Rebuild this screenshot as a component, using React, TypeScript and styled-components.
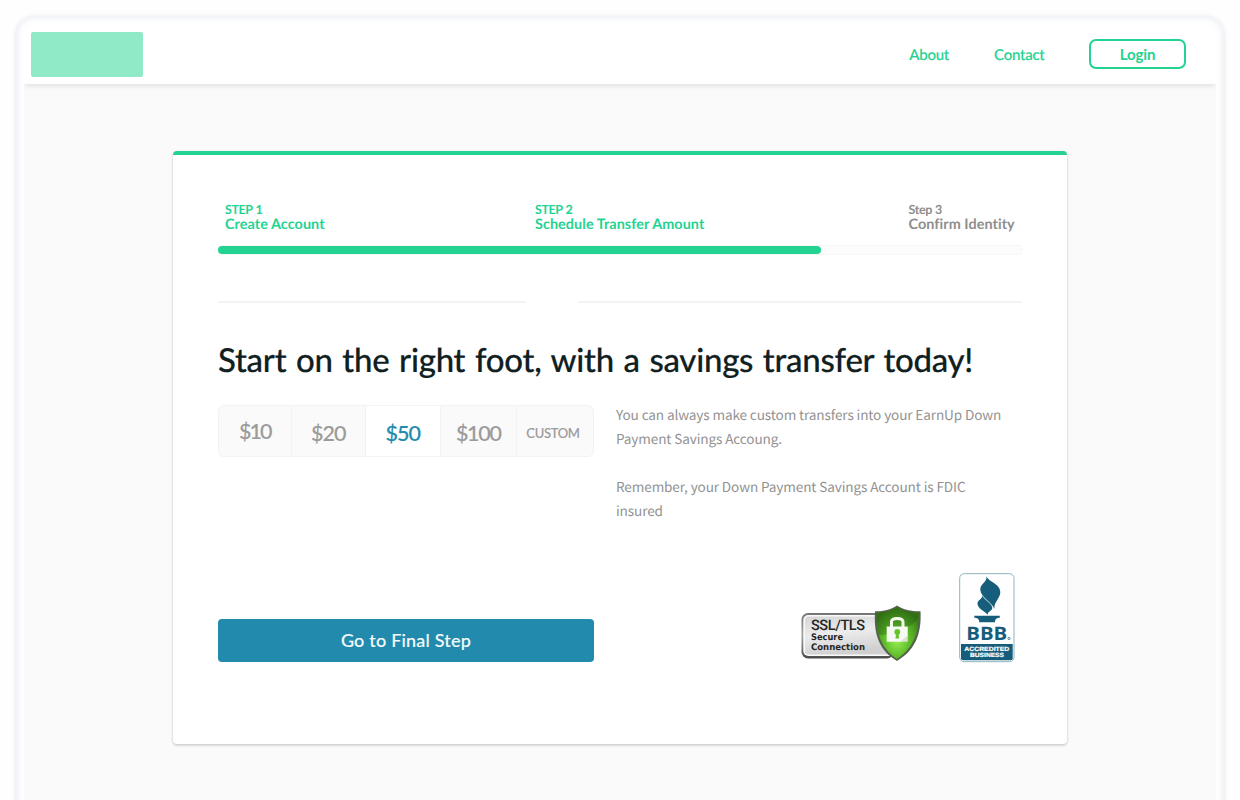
import React from 'react';
import styled, { createGlobalStyle } from 'styled-components';

const green = '#24d391';
const teal = '#228bad';
const display = "Lato, 'Open Sans', sans-serif";
const body = "'Noto Sans CJK SC', 'Noto Sans', sans-serif";

const GlobalStyle = createGlobalStyle`
  * { box-sizing: border-box; }
  html, body { margin: 0; background: #fefefe; }
  body { height: 800px; overflow: hidden; font-family: ${display}; text-rendering: geometricPrecision; }
  button { font-family: inherit; padding: 0; cursor: pointer; }
  p, h1 { margin: 0; }
`;

const Frame = styled.div`
  margin: 16px 16px 0 15.5px;
  height: 820px;
  padding: 8px 8px 0 8.5px;
  border-radius: 18px;
  background: #fff;
  box-shadow: inset 0 0 9px #e3e7f0, 0 1px 4px rgba(60, 70, 100, 0.13), 0 2px 14px rgba(60, 60, 70, 0.02);
`;

const Header = styled.header`
  position: relative;
  height: 60px;
  display: flex;
  align-items: center;
  padding: 0 30px 0 7.3px;
  box-shadow: 0 3px 5px -1px rgba(0, 0, 0, 0.1);
  clip-path: inset(0 0 -10px 0);
`;

const Logo = styled.div`
  width: 112px;
  height: 45px;
  border-radius: 2px;
  background: #90eac8;
  margin-right: auto;
`;

const NavLink = styled.a<{ $gap: number; $track: number }>`
  color: ${green};
  font-size: 15px;
  font-weight: 500;
  line-height: 20px;
  white-space: nowrap;
  letter-spacing: ${p => p.$track}px;
  -webkit-text-stroke: 0.15px ${green};
  margin: 2px ${p => p.$gap}px 0 0;
`;

const LoginButton = styled.button`
  width: 97px;
  height: 30px;
  border: 2px solid ${green};
  border-radius: 7px;
  background: #fff;
  color: ${green};
  font-size: 15px;
  font-weight: 700;
  letter-spacing: -0.1px;
  line-height: 26px;
`;

const Content = styled.main`
  background: #fafafa;
  height: 750px;
  padding: 67px 149px 0;
`;

const Card = styled.section`
  width: 894px;
  height: 593px;
  padding: 48px 44px 0 45px;
  border-top: 4px solid ${green};
  border-radius: 4px;
  background: #fff;
  box-shadow: 0 1px 3px rgba(0, 0, 0, 0.18), 0 2px 3px rgba(0, 0, 0, 0.05);
`;

const Steps = styled.div`
  display: grid;
  grid-template-columns: 310px 373.5px 1fr;
  padding-left: 7px;
  height: 42px;
`;

const Step = styled.div<{ $done?: boolean }>`
  display: flex;
  flex-direction: column;
  color: ${p => (p.$done ? green : '#8e8e8e')};
  white-space: nowrap;
`;

const StepNumber = styled.span`
  font-size: 12.5px;
  font-weight: 700;
  line-height: 14px;
  letter-spacing: -0.4px;
  word-spacing: 0.6px;
`;

const StepName = styled.span`
  font-size: 14.4px;
  font-weight: 700;
  line-height: 15px;
  letter-spacing: 0.06px;
`;

const Track = styled.div`
  height: 10px;
  border: 1px solid #f6f6f6;
  border-left: 0;
  border-radius: 5px;
  background: #fcfcfc;
`;

const Fill = styled.div`
  width: 603px;
  height: 8px;
  border-radius: 4px;
  background: ${green};
`;

const Dividers = styled.div`
  display: grid;
  grid-template-columns: 308px 444px;
  column-gap: 52px;
  margin-top: 46px;
`;

const Line = styled.div`
  height: 2px;
  background: #f4f4f4;
`;

const Title = styled.h1`
  margin-top: 37px;
  font-size: 33px;
  font-weight: 500;
  line-height: 40px;
  letter-spacing: -0.27px;
  word-spacing: 1.6px;
  white-space: nowrap;
  color: #10201f;
  -webkit-text-stroke: 0.2px #10201f;
`;

const Choices = styled.div`
  display: grid;
  grid-template-columns: 376px 1fr;
  column-gap: 22px;
  margin-top: 25px;
  height: 214px;
`;

const Amounts = styled.div`
  display: grid;
  grid-template-columns: 72.5px 74.5px 74.5px 76.5px 1fr;
  height: 52px;
  border: 1px solid #f3f3f3;
  border-radius: 6px;
  background: #fafafa;
  overflow: hidden;
`;

const Amount = styled.button<{ $active?: boolean; $small?: boolean; $drop?: number; $track?: number }>`
  border: 0;
  border-right: 1px solid #f3f3f3;
  background: ${p => (p.$active ? '#fff' : 'transparent')};
  color: ${p => (p.$active ? teal : '#9b9b9b')};
  font-size: ${p => (p.$small ? 13 : 21.5)}px;
  font-weight: 500;
  letter-spacing: ${p => (p.$small ? -0.3 : p.$track ?? -0.9)}px;
  -webkit-text-stroke: 0.15px ${p => (p.$active ? teal : '#9b9b9b')};
  padding: ${p => p.$drop ?? 3}px ${p => (p.$small ? 4 : 0)}px 0 0;
  &:last-child { border-right: 0; }
`;

const Notes = styled.div`
  width: 392px;
  margin-top: -3px;
  font-family: ${body};
  font-size: 13.6px;
  line-height: 24px;
  color: #929292;
  letter-spacing: -0.125px;
  p + p { margin-top: 24px; }
`;

const Footer = styled.div`
  display: grid;
  grid-template-columns: 376px 1fr;
`;

const Submit = styled.button`
  height: 43px;
  border: 0;
  border-radius: 4px;
  background: ${teal};
  color: #f4fafc;
  font-size: 18px;
  font-weight: 500;
  letter-spacing: 0.2px;
  padding-bottom: 2px;
  -webkit-text-stroke: 0.1px #f4fafc;
`;

const Badges = styled.div`
  display: flex;
  align-items: flex-end;
  justify-content: flex-end;
  margin-top: -50px;
  height: 94px;
  padding-right: 8px;
  gap: 35px;
`;

const SslBadge = () => (
  <svg width="124" height="60" viewBox="0 0 124 60">
    <defs>
      <linearGradient id="plate" x1="0" y1="0" x2="0.3" y2="1">
        <stop offset="0" stopColor="#d6d6d6" />
        <stop offset="0.5" stopColor="#ececec" />
        <stop offset="1" stopColor="#d0d0d0" />
      </linearGradient>
      <linearGradient id="rim" x1="0" y1="0" x2="0" y2="1">
        <stop offset="0" stopColor="#757575" />
        <stop offset="0.5" stopColor="#a5a5a5" />
        <stop offset="1" stopColor="#4a4a4a" />
      </linearGradient>
      <radialGradient id="leaf" cx="0.48" cy="0.65" r="0.62">
        <stop offset="0" stopColor="#98ec50" />
        <stop offset="0.5" stopColor="#5ebc2a" />
        <stop offset="1" stopColor="#3a8018" />
      </radialGradient>
    </defs>
    <rect x="1.500" y="10" width="92" height="45.500" rx="6.500" fill="url(#rim)" />
    <rect x="3.300" y="12" width="90" height="41" rx="5" fill="#fafafa" />
    <rect x="5" y="13.500" width="88" height="38" rx="3.500" fill="url(#plate)" />
    <g fill="#262626">
      <text x="11" y="27.300" fontFamily="Roboto, sans-serif" fontSize="14.500" fontWeight="500" textLength="54">SSL/TLS</text>
      <g fontFamily="'DejaVu Sans', sans-serif" fontSize="9" fontWeight="700">
        <text x="11" y="36.900" textLength="32" lengthAdjust="spacingAndGlyphs">Secure</text>
        <text x="11" y="47" textLength="54" lengthAdjust="spacingAndGlyphs">Connection</text>
      </g>
    </g>
    <path d="M97 2.500C90 7 83 8.500 75 8.300C74 26 76 46 97 58C118 46 121.500 26 120.500 8.300C112 8.500 104 7 97 2.500Z" fill="#56614e" />
    <path d="M97 4.300C90.500 8.200 84 9.700 76.700 9.700C76 26.500 79 44 97 56C115 44 119.300 26.500 118.800 9.700C111 9.700 103.500 8.200 97 4.300Z" fill="url(#leaf)" />
    <path d="M97 4.300C90.500 8.200 84 9.700 76.700 9.700C76.500 17 77 25 79 32C92 32 110 26 118.500 15L118.800 9.700C111 9.700 103.500 8.200 97 4.300Z" fill="#1d4a0c" opacity="0.28" />
    <path d="M91.500 24V18.800Q91.500 15.500 97.200 15.500T103 18.800V24" fill="none" stroke="#f4faee" strokeWidth="3" />
    <path d="M86.700 23.500H107.700V33.500L102.500 38.700H86.700Z" fill="#f6faf2" />
    <path d="M107.700 32.500L100 38.700H107.700Z" fill="#d9e3d0" />
    <circle cx="97.300" cy="29" r="2.900" fill="#68c22c" />
    <path d="M96.200 30H98.400L99.200 35.500H95.500Z" fill="#68c22c" />
  </svg>
);

const BbbBadge = () => (
  <svg width="56" height="90" viewBox="0 0 56 90">
    <rect x="0.700" y="0.700" width="54.300" height="88" rx="4.500" fill="#fff" stroke="#8fb2c0" />
    <path d="M2 71H53.700V85.500Q53.700 87.300 51.500 87.300H4.500Q2 87.300 2 85.500Z" fill="#155d7b" />
    <g fill="#155d7b">
      <path d="M27.500 3.300C29.500 9 41 10.500 41.300 19C41.500 25 34.500 29 35.500 36C33.500 30 22 24.500 21.300 17C20.800 10.500 28.500 9.500 27.500 3.300Z" />
      <path d="M23.500 22.500C25 27.500 33.300 30 33.300 35C33.300 38 28.300 38.500 28.700 41.800C26 38.500 18.500 35.500 18.500 30.500C18.500 27 23 26.500 23.500 22.500Z" />
      <path d="M15.300 42.700H40.800V44.700C38 44.700 36 45.500 36 49.300H20.300C20.300 45.500 18 44.700 15.300 44.700Z" />
    </g>
    <g fontFamily="'Liberation Sans', sans-serif" fontWeight="700">
      <text x="7.300" y="66.500" fontFamily="'Open Sans', sans-serif" fontSize="18.500" fill="#155d7b" textLength="41" lengthAdjust="spacingAndGlyphs">BBB</text>
      <circle cx="50" cy="65.500" r="1.100" fill="none" stroke="#155d7b" strokeWidth="0.700" />
      <text x="5.300" y="77.900" fontSize="6.200" fill="#fff" stroke="#fff" strokeWidth="0.200" textLength="45" lengthAdjust="spacingAndGlyphs">ACCREDITED</text>
      <text x="11" y="84.400" fontSize="6.200" fill="#fff" stroke="#fff" strokeWidth="0.200" textLength="34" lengthAdjust="spacingAndGlyphs">BUSINESS</text>
    </g>
  </svg>
);

export default function App() {
  return (
    <>
      <GlobalStyle />
      <Frame>
        <Header>
          <Logo />
          <NavLink $gap={45} $track={-0.25}>About</NavLink>
          <NavLink $gap={44.5} $track={-0.25}>Contact</NavLink>
          <LoginButton>Login</LoginButton>
        </Header>
        <Content>
          <Card>
            <Steps>
              <Step $done>
                <StepNumber>STEP 1</StepNumber>
                <StepName>Create Account</StepName>
              </Step>
              <Step $done>
                <StepNumber>STEP 2</StepNumber>
                <StepName>Schedule Transfer Amount</StepName>
              </Step>
              <Step>
                <StepNumber>Step 3</StepNumber>
                <StepName>Confirm Identity</StepName>
              </Step>
            </Steps>
            <Track><Fill /></Track>
            <Dividers><Line /><Line /></Dividers>
            <Title>Start on the right foot, with a savings transfer today!</Title>
            <Choices>
              <Amounts>
                <Amount $drop={0} $track={-2}>$10</Amount>
                <Amount>$20</Amount>
                <Amount $active>$50</Amount>
                <Amount $track={-1.3}>$100</Amount>
                <Amount $small>CUSTOM</Amount>
              </Amounts>
              <Notes>
                <p>You can always make custom transfers into your EarnUp Down Payment Savings Accoung.</p>
                <p>Remember, your Down Payment Savings Account is FDIC insured</p>
              </Notes>
            </Choices>
            <Footer>
              <Submit>Go to Final Step</Submit>
              <Badges><SslBadge /><BbbBadge /></Badges>
            </Footer>
          </Card>
        </Content>
      </Frame>
    </>
  );
}
